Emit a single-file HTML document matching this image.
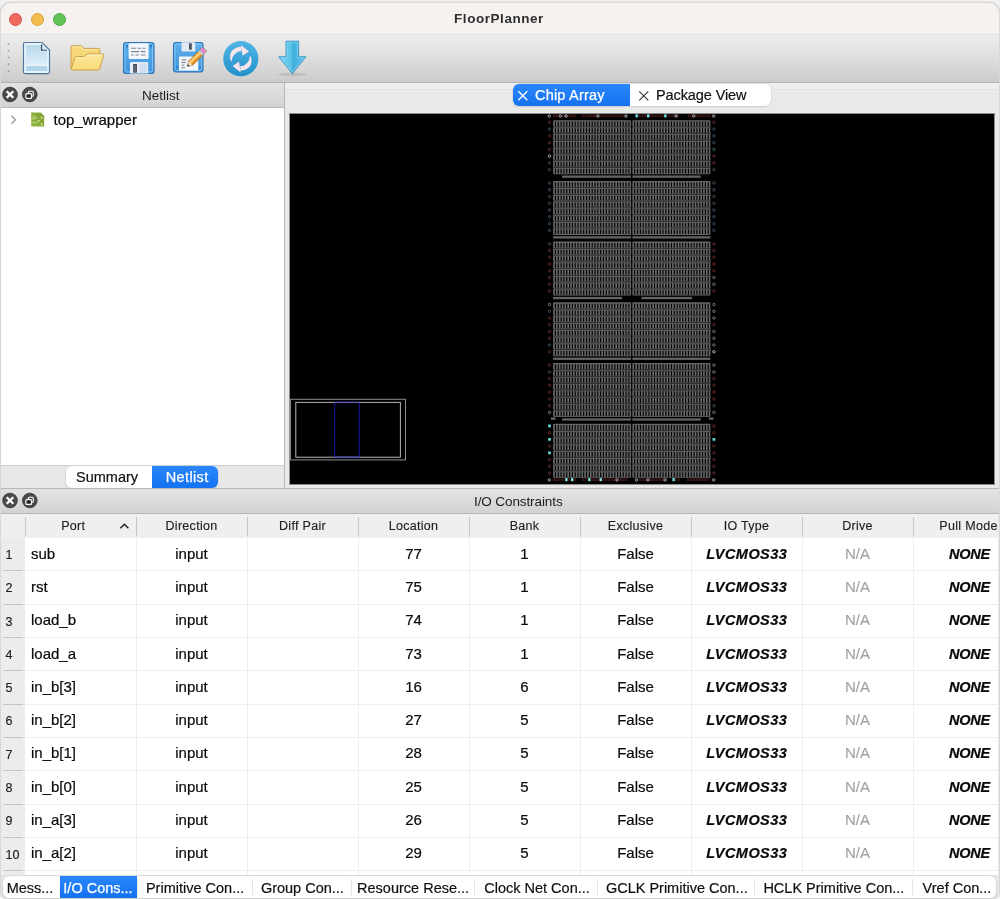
<!DOCTYPE html>
<html><head><meta charset="utf-8"><title>FloorPlanner</title>
<style>
html,body{margin:0;padding:0;}
body{width:1000px;height:899px;overflow:hidden;background:#f3f3f3;font-family:"Liberation Sans",sans-serif;position:relative;color:#1a1a1a;}
.abs{position:absolute;}
.win{position:absolute;left:0;top:2px;width:998px;height:895.5px;border:1px solid #d8d8d8;border-radius:11px 11px 10px 10px;box-shadow:0 0 2px rgba(0,0,0,0.2);overflow:hidden;background:#e9e9e9;box-sizing:content-box;}
.inner{position:absolute;left:-1px;top:-3px;width:1000px;height:899px;will-change:transform;}
.title{left:0;top:3px;width:1000px;height:31px;background:#f6f2f0;}
.title span{position:absolute;left:0;width:998px;text-align:center;top:8.2px;font-weight:bold;font-size:13.5px;letter-spacing:0.55px;color:#2e2e2e;line-height:16px;}
.tl{position:absolute;width:13px;height:13px;border-radius:50%;top:9.7px;box-sizing:border-box;}
.toolbar{left:0;top:34px;width:1000px;height:48px;background:linear-gradient(#ececec,#e4e4e4 30%,#cfcfcf 92%,#cacaca);border-top:1px solid #e2dfdd;box-sizing:border-box;}
.tbline{left:0;top:82px;width:1000px;height:1px;background:#b4b4b4;}
.dockhead{background:linear-gradient(#e3e3e3,#d3d3d3);font-size:13px;color:#222;text-align:center;}
.t{position:absolute;white-space:nowrap;line-height:1;}
</style></head><body>
<div class="win"><div class="inner">
<div class="abs title"><span>FloorPlanner</span>
<div class="tl" style="left:9px;background:#ee6a5f;border:0.5px solid #d5544a;"></div>
<div class="tl" style="left:31px;background:#f5bd4f;border:0.5px solid #d9a03c;"></div>
<div class="tl" style="left:53px;background:#61c454;border:0.5px solid #4ca73f;"></div>
</div>
<div class="abs toolbar"></div><div class="abs tbline"></div>
<svg class="abs" style="left:0;top:34px" width="1000" height="48" viewBox="0 34 1000 48">
<defs>
<linearGradient id="gdoc" x1="0" y1="0" x2="0" y2="1"><stop offset="0" stop-color="#b7d9eb"/><stop offset="1" stop-color="#eaf5fb"/></linearGradient>
<linearGradient id="gfold" x1="0" y1="0" x2="0" y2="1"><stop offset="0" stop-color="#fce79b"/><stop offset="1" stop-color="#f8da7a"/></linearGradient>
<linearGradient id="gflop" x1="0" y1="0" x2="0" y2="1"><stop offset="0" stop-color="#5eb0ee"/><stop offset="1" stop-color="#3f93da"/></linearGradient>
<linearGradient id="gref" x1="0" y1="0" x2="0" y2="1"><stop offset="0" stop-color="#52b5e5"/><stop offset="1" stop-color="#2291cb"/></linearGradient>
<linearGradient id="garr" x1="0" y1="0" x2="1" y2="0"><stop offset="0" stop-color="#7ed3f1"/><stop offset="0.5" stop-color="#58c0e7"/><stop offset="0.5" stop-color="#41afdc"/><stop offset="1" stop-color="#5ec3e9"/></linearGradient>
<linearGradient id="gnotch" x1="0" y1="0" x2="0" y2="1"><stop offset="0" stop-color="#1d5a9c"/><stop offset="1" stop-color="#3f93da" stop-opacity="0"/></linearGradient>
</defs>
<g fill="#9b9b9b"><rect x="7.7" y="43.2" width="1.6" height="1.6"/><rect x="7.7" y="50" width="1.6" height="1.6"/><rect x="7.7" y="56.7" width="1.6" height="1.6"/><rect x="7.7" y="63.4" width="1.6" height="1.6"/><rect x="7.7" y="70.2" width="1.6" height="1.6"/></g>
<!-- new doc -->
<path d="M25 42.5 H42 L49.5 50 V72 Q49.5 73.5 48 73.5 H25 Q23.5 73.5 23.5 72 V44 Q23.5 42.5 25 42.5 Z" fill="#e8f5fd" stroke="#54779c" stroke-width="1.2"/>
<path d="M24.6 73.9 H48.4" stroke="#4a6a8c" stroke-width="0.9" opacity="0.7"/>
<path d="M26 45 H41.3 V51.2 H47.3 V71 H26 Z" fill="url(#gdoc)"/>
<rect x="26" y="64.8" width="21.3" height="1.1" fill="#f4fafd"/><rect x="26" y="65.9" width="21.3" height="5.1" fill="#b0d4e9"/>
<path d="M41.6 44.6 V50.2 H47" fill="none" stroke="#34506c" stroke-width="1.3"/>
<path d="M42.6 44.8 L47.6 49.5 H42.6 Z" fill="#dcebf6"/>
<!-- folder -->
<path d="M71 47.2 Q71 45.7 72.5 45.7 H81.2 Q82 45.7 82.5 46.5 L83.6 48.4 H98.3 Q99.7 48.4 99.7 49.8 V69 H71 Z" fill="#f6d777" stroke="#cf9f45" stroke-width="1"/>
<path d="M72.2 47 H81.4 L82.9 49.6 H98.5" fill="none" stroke="#fdeeb4" stroke-width="0.9"/>
<path d="M75.6 56.6 H84 L87.2 53.9 H102.6 Q104 53.9 103.6 55.3 L99.6 68.8 Q99.2 70 98 70 H72.4 Q71 70 71.4 68.6 L74.6 57.6 Q74.9 56.6 75.6 56.6Z" fill="url(#gfold)" stroke="#cf9f45" stroke-width="1"/>
<path d="M76.2 57.8 H84.5 L87.7 55.1 H102.3" stroke="#fff4c8" stroke-width="0.9" fill="none"/>
<!-- save -->
<rect x="123.5" y="42.5" width="30.5" height="31" rx="2.6" fill="url(#gflop)" stroke="#2f74b8" stroke-width="1.1"/>
<rect x="125" y="44" width="27.5" height="28" rx="1.6" fill="none" stroke="#86c8f6" stroke-width="0.9"/>
<rect x="126" y="44.8" width="1.7" height="6" fill="url(#gnotch)"/><rect x="149.8" y="44.8" width="1.9" height="6" fill="url(#gnotch)"/>
<rect x="128.6" y="43.3" width="20" height="15.6" rx="1.2" fill="#f3f7fc"/>
<g stroke="#7c8690" stroke-width="1.1"><path d="M131 48.2h5M137.5 48.2h3.6M142.5 48.2h3M131 51.6h8.2M140.8 51.6h4.8M131 55h2.8M135.4 55h3.6M140.8 55h4.6"/></g>
<rect x="130" y="62" width="18.2" height="11.6" rx="1.2" fill="#e6edf8"/>
<rect x="139.5" y="63.2" width="7.6" height="9.6" fill="#d2ddef"/>
<rect x="133.2" y="64" width="3.7" height="8.6" fill="#3f454f"/>
<rect x="134.5" y="65" width="1.1" height="7.6" fill="#79818e"/>
<!-- save as -->
<rect x="173.5" y="42.5" width="29.5" height="29.5" rx="2.4" fill="url(#gflop)" stroke="#2f74b8" stroke-width="1.1"/>
<rect x="175" y="44" width="26.5" height="26.5" rx="1.5" fill="none" stroke="#86c8f6" stroke-width="0.9"/>
<rect x="181.5" y="42.3" width="13.8" height="9.2" rx="1" fill="#e3eaf6"/>
<rect x="189" y="43.3" width="2.8" height="6.4" fill="#4d545e"/>
<rect x="179" y="56.5" width="19.3" height="14" rx="1" fill="#f4f7fb"/>
<g stroke="#6d7680" stroke-width="1"><path d="M181.5 60h5M181.5 62.6h4.2M181.5 65.2h3M181.5 67.8h3.4"/></g>
<rect x="176" y="66.6" width="1.3" height="1.3" fill="#2a68a8"/><rect x="199.4" y="66.6" width="1.3" height="1.3" fill="#2a68a8"/>
<g transform="translate(187.4,66.4) rotate(-45)">
<path d="M0 0 L4.6 -2.9 H23.2 Q24.4 -2.9 24.4 -1.7 V1.7 Q24.4 2.9 23.2 2.9 H4.6 Z" fill="none" stroke="#6e4c1c" stroke-width="0.9" opacity="0.75"/>
<path d="M0 0 L4.6 -2.8 V2.8 Z" fill="#efd6b0"/>
<path d="M0 0 L1.9 -1.15 V1.15 Z" fill="#222"/>
<rect x="4.6" y="-2.8" width="13.6" height="5.6" fill="#f2a130"/>
<rect x="4.6" y="-1.5" width="13.6" height="1.7" fill="#fcd88f"/>
<rect x="4.6" y="1.5" width="13.6" height="1.3" fill="#d6871e"/>
<rect x="18.2" y="-2.9" width="1.8" height="5.8" fill="#d4d4d4"/>
<rect x="20" y="-2.9" width="4.3" height="5.8" rx="1.2" fill="#e08cc8"/>
</g>
<!-- refresh -->
<circle cx="240.8" cy="58.7" r="17.6" fill="url(#gref)"/>
<g id="rarr" fill="#f9e4eb"><path d="M231.57 61.52 L231.01 60.86 L230.63 60.10 L230.35 59.29 L230.16 58.45 L230.04 57.59 L230.01 56.70 L230.06 55.81 L230.19 54.91 L230.40 54.01 L230.69 53.13 L231.06 52.27 L231.50 51.44 L232.11 50.72 L232.78 50.05 L233.49 49.43 L234.26 48.88 L235.06 48.39 L235.91 47.96 L236.78 47.61 L237.68 47.32 L238.60 47.11 L239.53 46.97 L240.47 46.90 L241.42 46.92 L241.19 51.31 L240.60 51.30 L240.01 51.34 L239.42 51.43 L238.84 51.56 L238.28 51.74 L237.73 51.97 L237.20 52.23 L236.70 52.54 L236.22 52.89 L235.77 53.27 L235.35 53.69 L234.97 54.14 L234.52 54.55 L234.09 55.01 L233.70 55.50 L233.33 56.03 L233.00 56.60 L232.71 57.20 L232.46 57.84 L232.25 58.50 L232.08 59.20 L231.95 59.92 L231.84 60.67 L231.67 61.49Z"/><path d="M240.9 44.9 L248.9 51.5 L242.6 55.8 Z"/></g>
<use href="#rarr" transform="rotate(180 240.8 58.7)"/>
<!-- download arrow -->
<ellipse cx="292.3" cy="74.6" rx="14" ry="1.8" fill="#000" opacity="0.09"/>
<path d="M286 41.2 H298.6 V56.8 H305.8 L292.3 73.6 L278.8 56.8 H286 Z" fill="url(#garr)" stroke="#3798c8" stroke-width="1" stroke-linejoin="round"/>
<path d="M287.1 42.3 H297.5 V57.9 H303.4 L292.3 71.8 L281.2 57.9 H287.1 Z" fill="none" stroke="#8fd8f4" stroke-width="0.8" opacity="0.8"/>
</svg>

<!-- left dock -->
<div class="abs dockhead" style="left:0;top:83px;width:284px;height:24px;"></div>
<div class="abs" style="left:0;top:107px;width:284px;height:1px;background:#b9b9b9;"></div>
<span class="t" style="left:142px;top:88.5px;font-size:13.5px;color:#1c1c1c;">Netlist</span>
<svg class="abs" style="left:0px;top:86px" width="40" height="17" viewBox="0 0 40 17">
<circle cx="10" cy="8.5" r="7.3" fill="#4b4b4b" stroke="#2f2f2f" stroke-width="0.8"/>
<path d="M6.7 5.2 L13.3 11.8 M13.3 5.2 L6.7 11.8" stroke="#fff" stroke-width="2.3" stroke-linecap="butt"/>
<circle cx="29.8" cy="8.5" r="7.3" fill="#4b4b4b" stroke="#2f2f2f" stroke-width="0.8"/>
<rect x="28.3" y="5.2" width="5" height="5" rx="1" fill="none" stroke="#fff" stroke-width="1.1"/>
<rect x="25.9" y="7.6" width="5.6" height="4.8" rx="1" fill="#222" stroke="#fff" stroke-width="1.2"/>
</svg>
<div class="abs" style="left:0;top:108px;width:284px;height:357px;background:#fff;"></div>
<div class="abs" style="left:284px;top:83px;width:1px;height:405px;background:#b9b9b9;"></div>
<div class="abs" style="left:285px;top:83px;width:715px;height:6px;background:#eeeeee;"></div><div class="abs" style="left:285px;top:88.5px;width:715px;height:1px;background:#e2e2e2;"></div>
<div class="abs" style="left:0;top:464.5px;width:284px;height:1px;background:#cfcfcf;"></div>
<div class="abs" style="left:0;top:465.5px;width:284px;height:23px;background:#e7e7e7;"></div>
<svg class="abs" style="left:10px;top:114px" width="8" height="12" viewBox="0 0 8 12"><path d="M1.4 1.8 L5.6 5.8 L1.4 9.8" fill="none" stroke="#9c9c9c" stroke-width="1.3"/></svg>
<svg class="abs" style="left:31px;top:112px" width="14" height="15" viewBox="0 0 14 15">
<defs><linearGradient id="gchip" x1="0" y1="1" x2="1" y2="0"><stop offset="0" stop-color="#93b83c"/><stop offset="1" stop-color="#7f9f37"/></linearGradient></defs>
<path d="M0.2 0.6 H9.6 L13.2 3.8 V14.6 H0.2 Z" fill="url(#gchip)"/>
<g fill="#d4ea9c"><circle cx="10.7" cy="5.7" r="0.95"/><circle cx="7.6" cy="8.9" r="0.95"/><circle cx="10.7" cy="12.2" r="0.95"/><rect x="1.6" y="3.6" width="1.6" height="1.5" opacity="0.8"/><rect x="3.8" y="4.6" width="1.6" height="2" opacity="0.8"/><rect x="1.4" y="6" width="2" height="1.4" opacity="0.8"/></g>
<path d="M1 10.6 H5.6 Q6.6 10.6 7.2 9.6" fill="none" stroke="#c3dd8c" stroke-width="0.9"/>
</svg>
<span class="t" style="left:53.5px;top:112px;font-size:15px;color:#0a0a0a;-webkit-text-stroke:0.2px #0a0a0a;">top_wrapper</span>
<!-- left tabs -->
<div class="abs" style="left:66px;top:466px;width:152px;height:22px;border-radius:6px;background:#fff;box-shadow:0 0 0 0.5px #cfcfcf, 0 1px 1.5px rgba(0,0,0,0.12);"></div>
<div class="abs" style="left:152px;top:466px;width:66px;height:22px;border-radius:0 6px 6px 0;background:linear-gradient(#2a86fb,#1572f0);"></div>
<span class="t" style="left:76px;top:470px;font-size:14.5px;color:#111;-webkit-text-stroke:0.2px #111;">Summary</span>
<span class="t" style="left:165.8px;top:470px;font-size:14.5px;color:#fff;letter-spacing:0.35px;-webkit-text-stroke:0.25px #fff;">Netlist</span>
<!-- center tabs -->
<div class="abs" style="left:513px;top:84px;width:258px;height:22px;border-radius:6px;background:#fff;box-shadow:0 0 0 0.5px #d2d2d2, 0 1px 1.5px rgba(0,0,0,0.12);"></div>
<div class="abs" style="left:513px;top:84px;width:117px;height:22px;border-radius:6px 0 0 6px;background:linear-gradient(#2a86fb,#1572f0);"></div>
<svg class="abs" style="left:517px;top:90px" width="12" height="12" viewBox="0 0 12 12"><path d="M1.3 1.3 L10.3 10.3 M10.3 1.3 L1.3 10.3" stroke="#fff" stroke-width="1.3"/></svg>
<span class="t" style="left:535px;top:88px;font-size:14.5px;color:#fff;letter-spacing:0.2px;-webkit-text-stroke:0.25px #fff;">Chip Array</span>
<svg class="abs" style="left:638px;top:90px" width="12" height="12" viewBox="0 0 12 12"><path d="M1.3 1.3 L10.3 10.3 M10.3 1.3 L1.3 10.3" stroke="#3a3a3a" stroke-width="1.2"/></svg>
<span class="t" style="left:656px;top:88px;font-size:14.5px;color:#111;letter-spacing:-0.1px;-webkit-text-stroke:0.2px #111;">Package View</span>
<div class="abs" style="left:289px;top:113px;width:706px;height:371.5px;background:#8c8c8c;"></div>
<div class="abs" style="left:290px;top:114px;width:704px;height:369.6px;background:#000;"></div>
<svg class="abs" style="left:290px;top:114px" width="704" height="370" viewBox="290 114 704 370">
<defs><g id="hb"><rect x="0" y="0" width="78.0" height="54.0" rx="1" fill="#666666"/><path d="M0 6.75h78.0M0 13.50h78.0M0 20.25h78.0M0 27.00h78.0M0 33.75h78.0M0 40.50h78.0M0 47.25h78.0" stroke="#343434" stroke-width="1.3" fill="none"/><path d="M2.35 1.35v4.6M5.18 1.35v4.6M8.00 1.35v4.6M10.83 1.35v4.6M13.65 1.35v4.6M16.48 1.35v4.6M19.30 1.35v4.6M22.13 1.35v4.6M24.95 1.35v4.6M27.78 1.35v4.6M30.60 1.35v4.6M33.43 1.35v4.6M36.25 1.35v4.6M39.08 1.35v4.6M41.90 1.35v4.6M44.73 1.35v4.6M47.55 1.35v4.6M50.38 1.35v4.6M53.20 1.35v4.6M56.03 1.35v4.6M58.85 1.35v4.6M61.68 1.35v4.6M64.50 1.35v4.6M67.33 1.35v4.6M70.15 1.35v4.6M72.97 1.35v4.6M75.80 1.35v4.6M2.35 8.10v4.6M5.18 8.10v4.6M8.00 8.10v4.6M10.83 8.10v4.6M13.65 8.10v4.6M16.48 8.10v4.6M19.30 8.10v4.6M22.13 8.10v4.6M24.95 8.10v4.6M27.78 8.10v4.6M30.60 8.10v4.6M33.43 8.10v4.6M36.25 8.10v4.6M39.08 8.10v4.6M41.90 8.10v4.6M44.73 8.10v4.6M47.55 8.10v4.6M50.38 8.10v4.6M53.20 8.10v4.6M56.03 8.10v4.6M58.85 8.10v4.6M61.68 8.10v4.6M64.50 8.10v4.6M67.33 8.10v4.6M70.15 8.10v4.6M72.97 8.10v4.6M75.80 8.10v4.6M2.35 14.85v4.6M5.18 14.85v4.6M8.00 14.85v4.6M10.83 14.85v4.6M13.65 14.85v4.6M16.48 14.85v4.6M19.30 14.85v4.6M22.13 14.85v4.6M24.95 14.85v4.6M27.78 14.85v4.6M30.60 14.85v4.6M33.43 14.85v4.6M36.25 14.85v4.6M39.08 14.85v4.6M41.90 14.85v4.6M44.73 14.85v4.6M47.55 14.85v4.6M50.38 14.85v4.6M53.20 14.85v4.6M56.03 14.85v4.6M58.85 14.85v4.6M61.68 14.85v4.6M64.50 14.85v4.6M67.33 14.85v4.6M70.15 14.85v4.6M72.97 14.85v4.6M75.80 14.85v4.6M2.35 21.60v4.6M5.18 21.60v4.6M8.00 21.60v4.6M10.83 21.60v4.6M13.65 21.60v4.6M16.48 21.60v4.6M19.30 21.60v4.6M22.13 21.60v4.6M24.95 21.60v4.6M27.78 21.60v4.6M30.60 21.60v4.6M33.43 21.60v4.6M36.25 21.60v4.6M39.08 21.60v4.6M41.90 21.60v4.6M44.73 21.60v4.6M47.55 21.60v4.6M50.38 21.60v4.6M53.20 21.60v4.6M56.03 21.60v4.6M58.85 21.60v4.6M61.68 21.60v4.6M64.50 21.60v4.6M67.33 21.60v4.6M70.15 21.60v4.6M72.97 21.60v4.6M75.80 21.60v4.6M2.35 28.35v4.6M5.18 28.35v4.6M8.00 28.35v4.6M10.83 28.35v4.6M13.65 28.35v4.6M16.48 28.35v4.6M19.30 28.35v4.6M22.13 28.35v4.6M24.95 28.35v4.6M27.78 28.35v4.6M30.60 28.35v4.6M33.43 28.35v4.6M36.25 28.35v4.6M39.08 28.35v4.6M41.90 28.35v4.6M44.73 28.35v4.6M47.55 28.35v4.6M50.38 28.35v4.6M53.20 28.35v4.6M56.03 28.35v4.6M58.85 28.35v4.6M61.68 28.35v4.6M64.50 28.35v4.6M67.33 28.35v4.6M70.15 28.35v4.6M72.97 28.35v4.6M75.80 28.35v4.6M2.35 35.10v4.6M5.18 35.10v4.6M8.00 35.10v4.6M10.83 35.10v4.6M13.65 35.10v4.6M16.48 35.10v4.6M19.30 35.10v4.6M22.13 35.10v4.6M24.95 35.10v4.6M27.78 35.10v4.6M30.60 35.10v4.6M33.43 35.10v4.6M36.25 35.10v4.6M39.08 35.10v4.6M41.90 35.10v4.6M44.73 35.10v4.6M47.55 35.10v4.6M50.38 35.10v4.6M53.20 35.10v4.6M56.03 35.10v4.6M58.85 35.10v4.6M61.68 35.10v4.6M64.50 35.10v4.6M67.33 35.10v4.6M70.15 35.10v4.6M72.97 35.10v4.6M75.80 35.10v4.6M2.35 41.85v4.6M5.18 41.85v4.6M8.00 41.85v4.6M10.83 41.85v4.6M13.65 41.85v4.6M16.48 41.85v4.6M19.30 41.85v4.6M22.13 41.85v4.6M24.95 41.85v4.6M27.78 41.85v4.6M30.60 41.85v4.6M33.43 41.85v4.6M36.25 41.85v4.6M39.08 41.85v4.6M41.90 41.85v4.6M44.73 41.85v4.6M47.55 41.85v4.6M50.38 41.85v4.6M53.20 41.85v4.6M56.03 41.85v4.6M58.85 41.85v4.6M61.68 41.85v4.6M64.50 41.85v4.6M67.33 41.85v4.6M70.15 41.85v4.6M72.97 41.85v4.6M75.80 41.85v4.6M2.35 48.60v4.6M5.18 48.60v4.6M8.00 48.60v4.6M10.83 48.60v4.6M13.65 48.60v4.6M16.48 48.60v4.6M19.30 48.60v4.6M22.13 48.60v4.6M24.95 48.60v4.6M27.78 48.60v4.6M30.60 48.60v4.6M33.43 48.60v4.6M36.25 48.60v4.6M39.08 48.60v4.6M41.90 48.60v4.6M44.73 48.60v4.6M47.55 48.60v4.6M50.38 48.60v4.6M53.20 48.60v4.6M56.03 48.60v4.6M58.85 48.60v4.6M61.68 48.60v4.6M64.50 48.60v4.6M67.33 48.60v4.6M70.15 48.60v4.6M72.97 48.60v4.6M75.80 48.60v4.6" stroke="#000" stroke-width="1.15" fill="none"/></g></defs>
<use href="#hb" x="553.1" y="120.2"/><use href="#hb" x="632.4" y="120.2"/>
<use href="#hb" x="553.1" y="180.9"/><use href="#hb" x="632.4" y="180.9"/>
<use href="#hb" x="553.1" y="241.6"/><use href="#hb" x="632.4" y="241.6"/>
<use href="#hb" x="553.1" y="302.3"/><use href="#hb" x="632.4" y="302.3"/>
<use href="#hb" x="553.1" y="363.0"/><use href="#hb" x="632.4" y="363.0"/>
<use href="#hb" x="553.1" y="423.7"/><use href="#hb" x="632.4" y="423.7"/>
<rect x="562.0" y="175.5" width="69.0" height="2.3" fill="#646464"/>
<rect x="632.4" y="175.5" width="68.3" height="2.3" fill="#646464"/>
<rect x="553.1" y="236.2" width="77.9" height="2.3" fill="#646464"/>
<rect x="632.4" y="236.2" width="78.0" height="2.3" fill="#646464"/>
<rect x="553.1" y="296.9" width="68.9" height="2.3" fill="#646464"/>
<rect x="641.4" y="296.9" width="50.6" height="2.3" fill="#646464"/>
<rect x="553.1" y="357.6" width="77.9" height="2.3" fill="#646464"/>
<rect x="632.4" y="357.6" width="78.0" height="2.3" fill="#646464"/>
<rect x="562.0" y="418.3" width="69.0" height="2.3" fill="#646464"/>
<rect x="632.4" y="418.3" width="68.3" height="2.3" fill="#646464"/>
<rect x="551" y="417.6" width="4.5" height="2" fill="#777"/><rect x="709" y="417.6" width="4.5" height="2" fill="#777"/>
<rect x="548.35" y="121.22" width="2.3" height="2.3" rx="0.8" fill="#0a0a0a" stroke="#6a2a2a" stroke-width="0.9"/>
<rect x="712.75" y="121.22" width="2.3" height="2.3" rx="0.8" fill="#0a0a0a" stroke="#6a2a2a" stroke-width="0.9"/>
<rect x="548.35" y="127.97" width="2.3" height="2.3" rx="0.8" fill="#0a0a0a" stroke="#3e5163" stroke-width="0.9"/>
<rect x="712.75" y="127.97" width="2.3" height="2.3" rx="0.8" fill="#0a0a0a" stroke="#3e5163" stroke-width="0.9"/>
<rect x="548.35" y="134.72" width="2.3" height="2.3" rx="0.8" fill="#0a0a0a" stroke="#6a2a2a" stroke-width="0.9"/>
<rect x="712.75" y="134.72" width="2.3" height="2.3" rx="0.8" fill="#0a0a0a" stroke="#3e5163" stroke-width="0.9"/>
<rect x="548.35" y="141.47" width="2.3" height="2.3" rx="0.8" fill="#0a0a0a" stroke="#6a2a2a" stroke-width="0.9"/>
<rect x="712.75" y="141.47" width="2.3" height="2.3" rx="0.8" fill="#0a0a0a" stroke="#3e5163" stroke-width="0.9"/>
<rect x="548.35" y="148.22" width="2.3" height="2.3" rx="0.8" fill="#0a0a0a" stroke="#6a2a2a" stroke-width="0.9"/>
<rect x="712.75" y="148.22" width="2.3" height="2.3" rx="0.8" fill="#0a0a0a" stroke="#2f6a6a" stroke-width="0.9"/>
<rect x="548.35" y="154.97" width="2.3" height="2.3" rx="0.8" fill="#0a0a0a" stroke="#c4c4c4" stroke-width="0.9"/>
<rect x="712.75" y="154.97" width="2.3" height="2.3" rx="0.8" fill="#0a0a0a" stroke="#6a2a2a" stroke-width="0.9"/>
<rect x="548.35" y="161.72" width="2.3" height="2.3" rx="0.8" fill="#0a0a0a" stroke="#3e5163" stroke-width="0.9"/>
<rect x="712.75" y="161.72" width="2.3" height="2.3" rx="0.8" fill="#0a0a0a" stroke="#6a2a2a" stroke-width="0.9"/>
<rect x="548.35" y="168.47" width="2.3" height="2.3" rx="0.8" fill="#0a0a0a" stroke="#3e5163" stroke-width="0.9"/>
<rect x="712.75" y="168.47" width="2.3" height="2.3" rx="0.8" fill="#0a0a0a" stroke="#3e5163" stroke-width="0.9"/>
<rect x="548.35" y="181.93" width="2.3" height="2.3" rx="0.8" fill="#0a0a0a" stroke="#3e5163" stroke-width="0.9"/>
<rect x="712.75" y="181.93" width="2.3" height="2.3" rx="0.8" fill="#0a0a0a" stroke="#3e5163" stroke-width="0.9"/>
<rect x="548.35" y="188.68" width="2.3" height="2.3" rx="0.8" fill="#0a0a0a" stroke="#3e5163" stroke-width="0.9"/>
<rect x="712.75" y="188.68" width="2.3" height="2.3" rx="0.8" fill="#0a0a0a" stroke="#3e5163" stroke-width="0.9"/>
<rect x="548.35" y="195.43" width="2.3" height="2.3" rx="0.8" fill="#0a0a0a" stroke="#3e5163" stroke-width="0.9"/>
<rect x="712.75" y="195.43" width="2.3" height="2.3" rx="0.8" fill="#0a0a0a" stroke="#3e5163" stroke-width="0.9"/>
<rect x="548.35" y="202.18" width="2.3" height="2.3" rx="0.8" fill="#0a0a0a" stroke="#3e5163" stroke-width="0.9"/>
<rect x="712.75" y="202.18" width="2.3" height="2.3" rx="0.8" fill="#0a0a0a" stroke="#3e5163" stroke-width="0.9"/>
<rect x="548.35" y="208.93" width="2.3" height="2.3" rx="0.8" fill="#0a0a0a" stroke="#3e5163" stroke-width="0.9"/>
<rect x="712.75" y="208.93" width="2.3" height="2.3" rx="0.8" fill="#0a0a0a" stroke="#3e5163" stroke-width="0.9"/>
<rect x="548.35" y="215.68" width="2.3" height="2.3" rx="0.8" fill="#0a0a0a" stroke="#3e5163" stroke-width="0.9"/>
<rect x="712.75" y="215.68" width="2.3" height="2.3" rx="0.8" fill="#0a0a0a" stroke="#3e5163" stroke-width="0.9"/>
<rect x="548.35" y="222.43" width="2.3" height="2.3" rx="0.8" fill="#0a0a0a" stroke="#3e5163" stroke-width="0.9"/>
<rect x="712.75" y="222.43" width="2.3" height="2.3" rx="0.8" fill="#0a0a0a" stroke="#3e5163" stroke-width="0.9"/>
<rect x="548.35" y="229.18" width="2.3" height="2.3" rx="0.8" fill="#0a0a0a" stroke="#3e5163" stroke-width="0.9"/>
<rect x="712.75" y="229.18" width="2.3" height="2.3" rx="0.8" fill="#0a0a0a" stroke="#3e5163" stroke-width="0.9"/>
<rect x="548.35" y="242.63" width="2.3" height="2.3" rx="0.8" fill="#0a0a0a" stroke="#3e5163" stroke-width="0.9"/>
<rect x="712.75" y="242.63" width="2.3" height="2.3" rx="0.8" fill="#0a0a0a" stroke="#6a2a2a" stroke-width="0.9"/>
<rect x="548.35" y="249.38" width="2.3" height="2.3" rx="0.8" fill="#0a0a0a" stroke="#6a2a2a" stroke-width="0.9"/>
<rect x="712.75" y="249.38" width="2.3" height="2.3" rx="0.8" fill="#0a0a0a" stroke="#6a2a2a" stroke-width="0.9"/>
<rect x="548.35" y="256.13" width="2.3" height="2.3" rx="0.8" fill="#0a0a0a" stroke="#6a2a2a" stroke-width="0.9"/>
<rect x="712.75" y="256.13" width="2.3" height="2.3" rx="0.8" fill="#0a0a0a" stroke="#6a2a2a" stroke-width="0.9"/>
<rect x="548.35" y="262.88" width="2.3" height="2.3" rx="0.8" fill="#0a0a0a" stroke="#6a2a2a" stroke-width="0.9"/>
<rect x="712.75" y="262.88" width="2.3" height="2.3" rx="0.8" fill="#0a0a0a" stroke="#6a2a2a" stroke-width="0.9"/>
<rect x="548.35" y="269.63" width="2.3" height="2.3" rx="0.8" fill="#0a0a0a" stroke="#6a2a2a" stroke-width="0.9"/>
<rect x="712.75" y="269.63" width="2.3" height="2.3" rx="0.8" fill="#0a0a0a" stroke="#6a2a2a" stroke-width="0.9"/>
<rect x="548.35" y="276.38" width="2.3" height="2.3" rx="0.8" fill="#0a0a0a" stroke="#6a2a2a" stroke-width="0.9"/>
<rect x="712.75" y="276.38" width="2.3" height="2.3" rx="0.8" fill="#0a0a0a" stroke="#7e7e7e" stroke-width="0.9"/>
<rect x="548.35" y="283.13" width="2.3" height="2.3" rx="0.8" fill="#0a0a0a" stroke="#6a2a2a" stroke-width="0.9"/>
<rect x="712.75" y="283.13" width="2.3" height="2.3" rx="0.8" fill="#0a0a0a" stroke="#7e7e7e" stroke-width="0.9"/>
<rect x="548.35" y="289.88" width="2.3" height="2.3" rx="0.8" fill="#0a0a0a" stroke="#6a2a2a" stroke-width="0.9"/>
<rect x="712.75" y="289.88" width="2.3" height="2.3" rx="0.8" fill="#0a0a0a" stroke="#6a2a2a" stroke-width="0.9"/>
<rect x="548.35" y="303.33" width="2.3" height="2.3" rx="0.8" fill="#0a0a0a" stroke="#7e7e7e" stroke-width="0.9"/>
<rect x="712.75" y="303.33" width="2.3" height="2.3" rx="0.8" fill="#0a0a0a" stroke="#7e7e7e" stroke-width="0.9"/>
<rect x="548.35" y="310.08" width="2.3" height="2.3" rx="0.8" fill="#0a0a0a" stroke="#3e5163" stroke-width="0.9"/>
<rect x="712.75" y="310.08" width="2.3" height="2.3" rx="0.8" fill="#0a0a0a" stroke="#7e7e7e" stroke-width="0.9"/>
<rect x="548.35" y="316.83" width="2.3" height="2.3" rx="0.8" fill="#0a0a0a" stroke="#6a2a2a" stroke-width="0.9"/>
<rect x="712.75" y="316.83" width="2.3" height="2.3" rx="0.8" fill="#0a0a0a" stroke="#7e7e7e" stroke-width="0.9"/>
<rect x="548.35" y="323.58" width="2.3" height="2.3" rx="0.8" fill="#0a0a0a" stroke="#6a2a2a" stroke-width="0.9"/>
<rect x="712.75" y="323.58" width="2.3" height="2.3" rx="0.8" fill="#0a0a0a" stroke="#6a2a2a" stroke-width="0.9"/>
<rect x="548.35" y="330.33" width="2.3" height="2.3" rx="0.8" fill="#0a0a0a" stroke="#6a2a2a" stroke-width="0.9"/>
<rect x="712.75" y="330.33" width="2.3" height="2.3" rx="0.8" fill="#0a0a0a" stroke="#7e7e7e" stroke-width="0.9"/>
<rect x="548.35" y="337.08" width="2.3" height="2.3" rx="0.8" fill="#0a0a0a" stroke="#6a2a2a" stroke-width="0.9"/>
<rect x="712.75" y="337.08" width="2.3" height="2.3" rx="0.8" fill="#0a0a0a" stroke="#7e7e7e" stroke-width="0.9"/>
<rect x="548.35" y="343.83" width="2.3" height="2.3" rx="0.8" fill="#0a0a0a" stroke="#3e5163" stroke-width="0.9"/>
<rect x="712.75" y="343.83" width="2.3" height="2.3" rx="0.8" fill="#0a0a0a" stroke="#7e7e7e" stroke-width="0.9"/>
<rect x="548.35" y="350.58" width="2.3" height="2.3" rx="0.8" fill="#0a0a0a" stroke="#6a2a2a" stroke-width="0.9"/>
<rect x="712.75" y="350.58" width="2.3" height="2.3" rx="0.8" fill="#0a0a0a" stroke="#c4c4c4" stroke-width="0.9"/>
<rect x="548.35" y="364.03" width="2.3" height="2.3" rx="0.8" fill="#0a0a0a" stroke="#6a2a2a" stroke-width="0.9"/>
<rect x="712.75" y="364.03" width="2.3" height="2.3" rx="0.8" fill="#0a0a0a" stroke="#7e7e7e" stroke-width="0.9"/>
<rect x="548.35" y="370.78" width="2.3" height="2.3" rx="0.8" fill="#0a0a0a" stroke="#3e5163" stroke-width="0.9"/>
<rect x="712.75" y="370.78" width="2.3" height="2.3" rx="0.8" fill="#0a0a0a" stroke="#7e7e7e" stroke-width="0.9"/>
<rect x="548.35" y="377.53" width="2.3" height="2.3" rx="0.8" fill="#0a0a0a" stroke="#6a2a2a" stroke-width="0.9"/>
<rect x="712.75" y="377.53" width="2.3" height="2.3" rx="0.8" fill="#0a0a0a" stroke="#6a2a2a" stroke-width="0.9"/>
<rect x="548.35" y="384.28" width="2.3" height="2.3" rx="0.8" fill="#0a0a0a" stroke="#6a2a2a" stroke-width="0.9"/>
<rect x="712.75" y="384.28" width="2.3" height="2.3" rx="0.8" fill="#0a0a0a" stroke="#6a2a2a" stroke-width="0.9"/>
<rect x="548.35" y="391.03" width="2.3" height="2.3" rx="0.8" fill="#0a0a0a" stroke="#6a2a2a" stroke-width="0.9"/>
<rect x="712.75" y="391.03" width="2.3" height="2.3" rx="0.8" fill="#0a0a0a" stroke="#6a2a2a" stroke-width="0.9"/>
<rect x="548.35" y="397.78" width="2.3" height="2.3" rx="0.8" fill="#0a0a0a" stroke="#6a2a2a" stroke-width="0.9"/>
<rect x="712.75" y="397.78" width="2.3" height="2.3" rx="0.8" fill="#0a0a0a" stroke="#6a2a2a" stroke-width="0.9"/>
<rect x="548.35" y="404.53" width="2.3" height="2.3" rx="0.8" fill="#0a0a0a" stroke="#6a2a2a" stroke-width="0.9"/>
<rect x="712.75" y="404.53" width="2.3" height="2.3" rx="0.8" fill="#0a0a0a" stroke="#3e5163" stroke-width="0.9"/>
<rect x="548.35" y="411.28" width="2.3" height="2.3" rx="0.8" fill="#0a0a0a" stroke="#7e7e7e" stroke-width="0.9"/>
<rect x="712.75" y="411.28" width="2.3" height="2.3" rx="0.8" fill="#0a0a0a" stroke="#7e7e7e" stroke-width="0.9"/>
<rect x="548.15" y="424.53" width="2.7" height="2.7" fill="#62dcdc"/>
<rect x="712.75" y="424.73" width="2.3" height="2.3" rx="0.8" fill="#0a0a0a" stroke="#6a2a2a" stroke-width="0.9"/>
<rect x="548.35" y="431.48" width="2.3" height="2.3" rx="0.8" fill="#0a0a0a" stroke="#6a2a2a" stroke-width="0.9"/>
<rect x="712.75" y="431.48" width="2.3" height="2.3" rx="0.8" fill="#0a0a0a" stroke="#6a2a2a" stroke-width="0.9"/>
<rect x="548.15" y="438.03" width="2.7" height="2.7" fill="#62dcdc"/>
<rect x="712.55" y="438.03" width="2.7" height="2.7" fill="#62dcdc"/>
<rect x="548.35" y="444.98" width="2.3" height="2.3" rx="0.8" fill="#0a0a0a" stroke="#6a2a2a" stroke-width="0.9"/>
<rect x="712.75" y="444.98" width="2.3" height="2.3" rx="0.8" fill="#0a0a0a" stroke="#6a2a2a" stroke-width="0.9"/>
<rect x="548.15" y="451.53" width="2.7" height="2.7" fill="#62dcdc"/>
<rect x="712.75" y="451.73" width="2.3" height="2.3" rx="0.8" fill="#0a0a0a" stroke="#6a2a2a" stroke-width="0.9"/>
<rect x="548.35" y="458.48" width="2.3" height="2.3" rx="0.8" fill="#0a0a0a" stroke="#6a2a2a" stroke-width="0.9"/>
<rect x="712.75" y="458.48" width="2.3" height="2.3" rx="0.8" fill="#0a0a0a" stroke="#6a2a2a" stroke-width="0.9"/>
<rect x="548.35" y="465.23" width="2.3" height="2.3" rx="0.8" fill="#0a0a0a" stroke="#6a2a2a" stroke-width="0.9"/>
<rect x="712.75" y="465.23" width="2.3" height="2.3" rx="0.8" fill="#0a0a0a" stroke="#6a2a2a" stroke-width="0.9"/>
<rect x="548.35" y="471.98" width="2.3" height="2.3" rx="0.8" fill="#0a0a0a" stroke="#6a2a2a" stroke-width="0.9"/>
<rect x="712.75" y="471.98" width="2.3" height="2.3" rx="0.8" fill="#0a0a0a" stroke="#6a2a2a" stroke-width="0.9"/>
<rect x="553.65" y="114.80" width="1.7" height="2" fill="#1a0a0a" stroke="#431919" stroke-width="0.7"/><rect x="556.54" y="114.80" width="1.7" height="2" fill="#1a0a0a" stroke="#431919" stroke-width="0.7"/><rect x="559.43" y="114.80" width="1.7" height="2" fill="#1a0a0a" stroke="#431919" stroke-width="0.7"/><rect x="562.32" y="114.80" width="1.7" height="2" fill="#1a0a0a" stroke="#431919" stroke-width="0.7"/><rect x="565.21" y="114.80" width="1.7" height="2" fill="#1a0a0a" stroke="#431919" stroke-width="0.7"/><rect x="568.09" y="114.80" width="1.7" height="2" fill="#1a0a0a" stroke="#431919" stroke-width="0.7"/><rect x="570.98" y="114.80" width="1.7" height="2" fill="#1a0a0a" stroke="#431919" stroke-width="0.7"/><rect x="573.87" y="114.80" width="1.7" height="2" fill="#1a0a0a" stroke="#431919" stroke-width="0.7"/><rect x="582.15" y="114.80" width="1.7" height="2" fill="#1a0a0a" stroke="#431919" stroke-width="0.7"/><rect x="585.04" y="114.80" width="1.7" height="2" fill="#1a0a0a" stroke="#431919" stroke-width="0.7"/><rect x="587.93" y="114.80" width="1.7" height="2" fill="#1a0a0a" stroke="#431919" stroke-width="0.7"/><rect x="590.82" y="114.80" width="1.7" height="2" fill="#1a0a0a" stroke="#431919" stroke-width="0.7"/><rect x="593.71" y="114.80" width="1.7" height="2" fill="#1a0a0a" stroke="#431919" stroke-width="0.7"/><rect x="596.59" y="114.80" width="1.7" height="2" fill="#1a0a0a" stroke="#431919" stroke-width="0.7"/><rect x="599.48" y="114.80" width="1.7" height="2" fill="#1a0a0a" stroke="#431919" stroke-width="0.7"/><rect x="602.37" y="114.80" width="1.7" height="2" fill="#1a0a0a" stroke="#431919" stroke-width="0.7"/><rect x="605.26" y="114.80" width="1.7" height="2" fill="#1a0a0a" stroke="#431919" stroke-width="0.7"/><rect x="608.15" y="114.80" width="1.7" height="2" fill="#1a0a0a" stroke="#431919" stroke-width="0.7"/><rect x="611.04" y="114.80" width="1.7" height="2" fill="#1a0a0a" stroke="#431919" stroke-width="0.7"/><rect x="613.93" y="114.80" width="1.7" height="2" fill="#1a0a0a" stroke="#431919" stroke-width="0.7"/><rect x="616.82" y="114.80" width="1.7" height="2" fill="#1a0a0a" stroke="#431919" stroke-width="0.7"/><rect x="619.71" y="114.80" width="1.7" height="2" fill="#1a0a0a" stroke="#431919" stroke-width="0.7"/><rect x="622.59" y="114.80" width="1.7" height="2" fill="#1a0a0a" stroke="#431919" stroke-width="0.7"/><rect x="638.15" y="114.80" width="1.7" height="2" fill="#1a0a0a" stroke="#431919" stroke-width="0.7"/><rect x="641.04" y="114.80" width="1.7" height="2" fill="#1a0a0a" stroke="#431919" stroke-width="0.7"/><rect x="643.93" y="114.80" width="1.7" height="2" fill="#1a0a0a" stroke="#431919" stroke-width="0.7"/><rect x="646.82" y="114.80" width="1.7" height="2" fill="#1a0a0a" stroke="#431919" stroke-width="0.7"/><rect x="649.71" y="114.80" width="1.7" height="2" fill="#1a0a0a" stroke="#431919" stroke-width="0.7"/><rect x="652.59" y="114.80" width="1.7" height="2" fill="#1a0a0a" stroke="#431919" stroke-width="0.7"/><rect x="655.48" y="114.80" width="1.7" height="2" fill="#1a0a0a" stroke="#431919" stroke-width="0.7"/><rect x="658.37" y="114.80" width="1.7" height="2" fill="#1a0a0a" stroke="#431919" stroke-width="0.7"/><rect x="661.26" y="114.80" width="1.7" height="2" fill="#1a0a0a" stroke="#431919" stroke-width="0.7"/><rect x="668.15" y="114.80" width="1.7" height="2" fill="#1a0a0a" stroke="#431919" stroke-width="0.7"/><rect x="671.04" y="114.80" width="1.7" height="2" fill="#1a0a0a" stroke="#431919" stroke-width="0.7"/><rect x="673.93" y="114.80" width="1.7" height="2" fill="#1a0a0a" stroke="#431919" stroke-width="0.7"/><rect x="676.82" y="114.80" width="1.7" height="2" fill="#1a0a0a" stroke="#431919" stroke-width="0.7"/><rect x="688.15" y="114.80" width="1.7" height="2" fill="#1a0a0a" stroke="#431919" stroke-width="0.7"/><rect x="691.04" y="114.80" width="1.7" height="2" fill="#1a0a0a" stroke="#431919" stroke-width="0.7"/><rect x="693.93" y="114.80" width="1.7" height="2" fill="#1a0a0a" stroke="#431919" stroke-width="0.7"/><rect x="696.82" y="114.80" width="1.7" height="2" fill="#1a0a0a" stroke="#431919" stroke-width="0.7"/><rect x="699.71" y="114.80" width="1.7" height="2" fill="#1a0a0a" stroke="#431919" stroke-width="0.7"/><rect x="702.59" y="114.80" width="1.7" height="2" fill="#1a0a0a" stroke="#431919" stroke-width="0.7"/><rect x="705.48" y="114.80" width="1.7" height="2" fill="#1a0a0a" stroke="#431919" stroke-width="0.7"/><rect x="708.37" y="114.80" width="1.7" height="2" fill="#1a0a0a" stroke="#431919" stroke-width="0.7"/><circle cx="549.30" cy="116.00" r="1.25" fill="#2a2a2a" stroke="#a2a2a2" stroke-width="0.9"/><circle cx="560.40" cy="116.00" r="1.25" fill="#2a2a2a" stroke="#a2a2a2" stroke-width="0.9"/><circle cx="566.00" cy="116.00" r="1.25" fill="#2a2a2a" stroke="#a2a2a2" stroke-width="0.9"/><circle cx="597.90" cy="116.00" r="1.25" fill="#2a2a2a" stroke="#a2a2a2" stroke-width="0.9"/><circle cx="626.00" cy="116.00" r="1.25" fill="#2a2a2a" stroke="#a2a2a2" stroke-width="0.9"/><circle cx="676.00" cy="116.00" r="1.25" fill="#2a2a2a" stroke="#a2a2a2" stroke-width="0.9"/><circle cx="693.70" cy="116.00" r="1.25" fill="#2a2a2a" stroke="#a2a2a2" stroke-width="0.9"/><circle cx="713.70" cy="116.00" r="1.25" fill="#2a2a2a" stroke="#a2a2a2" stroke-width="0.9"/><rect x="635.50" y="114.20" width="2.4" height="3.2" rx="0.6" fill="#74e4e4"/><rect x="647.00" y="114.20" width="2.4" height="3.2" rx="0.6" fill="#74e4e4"/><rect x="664.20" y="114.20" width="2.4" height="3.2" rx="0.6" fill="#74e4e4"/>
<rect x="553.65" y="478.70" width="1.7" height="2" fill="#1a0a0a" stroke="#431919" stroke-width="0.7"/><rect x="556.54" y="478.70" width="1.7" height="2" fill="#1a0a0a" stroke="#431919" stroke-width="0.7"/><rect x="559.43" y="478.70" width="1.7" height="2" fill="#1a0a0a" stroke="#431919" stroke-width="0.7"/><rect x="562.32" y="478.70" width="1.7" height="2" fill="#1a0a0a" stroke="#431919" stroke-width="0.7"/><rect x="565.21" y="478.70" width="1.7" height="2" fill="#1a0a0a" stroke="#431919" stroke-width="0.7"/><rect x="568.09" y="478.70" width="1.7" height="2" fill="#1a0a0a" stroke="#431919" stroke-width="0.7"/><rect x="570.98" y="478.70" width="1.7" height="2" fill="#1a0a0a" stroke="#431919" stroke-width="0.7"/><rect x="573.87" y="478.70" width="1.7" height="2" fill="#1a0a0a" stroke="#431919" stroke-width="0.7"/><rect x="582.15" y="478.70" width="1.7" height="2" fill="#1a0a0a" stroke="#431919" stroke-width="0.7"/><rect x="585.04" y="478.70" width="1.7" height="2" fill="#1a0a0a" stroke="#431919" stroke-width="0.7"/><rect x="587.93" y="478.70" width="1.7" height="2" fill="#1a0a0a" stroke="#431919" stroke-width="0.7"/><rect x="590.82" y="478.70" width="1.7" height="2" fill="#1a0a0a" stroke="#431919" stroke-width="0.7"/><rect x="593.71" y="478.70" width="1.7" height="2" fill="#1a0a0a" stroke="#431919" stroke-width="0.7"/><rect x="596.59" y="478.70" width="1.7" height="2" fill="#1a0a0a" stroke="#431919" stroke-width="0.7"/><rect x="599.48" y="478.70" width="1.7" height="2" fill="#1a0a0a" stroke="#431919" stroke-width="0.7"/><rect x="602.37" y="478.70" width="1.7" height="2" fill="#1a0a0a" stroke="#431919" stroke-width="0.7"/><rect x="605.26" y="478.70" width="1.7" height="2" fill="#1a0a0a" stroke="#431919" stroke-width="0.7"/><rect x="608.15" y="478.70" width="1.7" height="2" fill="#1a0a0a" stroke="#431919" stroke-width="0.7"/><rect x="611.04" y="478.70" width="1.7" height="2" fill="#1a0a0a" stroke="#431919" stroke-width="0.7"/><rect x="613.93" y="478.70" width="1.7" height="2" fill="#1a0a0a" stroke="#431919" stroke-width="0.7"/><rect x="616.82" y="478.70" width="1.7" height="2" fill="#1a0a0a" stroke="#431919" stroke-width="0.7"/><rect x="619.71" y="478.70" width="1.7" height="2" fill="#1a0a0a" stroke="#431919" stroke-width="0.7"/><rect x="622.59" y="478.70" width="1.7" height="2" fill="#1a0a0a" stroke="#431919" stroke-width="0.7"/><rect x="625.48" y="478.70" width="1.7" height="2" fill="#1a0a0a" stroke="#431919" stroke-width="0.7"/><rect x="639.15" y="478.70" width="1.7" height="2" fill="#1a0a0a" stroke="#431919" stroke-width="0.7"/><rect x="642.04" y="478.70" width="1.7" height="2" fill="#1a0a0a" stroke="#431919" stroke-width="0.7"/><rect x="644.93" y="478.70" width="1.7" height="2" fill="#1a0a0a" stroke="#431919" stroke-width="0.7"/><rect x="647.82" y="478.70" width="1.7" height="2" fill="#1a0a0a" stroke="#431919" stroke-width="0.7"/><rect x="650.71" y="478.70" width="1.7" height="2" fill="#1a0a0a" stroke="#431919" stroke-width="0.7"/><rect x="653.59" y="478.70" width="1.7" height="2" fill="#1a0a0a" stroke="#431919" stroke-width="0.7"/><rect x="656.48" y="478.70" width="1.7" height="2" fill="#1a0a0a" stroke="#431919" stroke-width="0.7"/><rect x="659.37" y="478.70" width="1.7" height="2" fill="#1a0a0a" stroke="#431919" stroke-width="0.7"/><rect x="662.26" y="478.70" width="1.7" height="2" fill="#1a0a0a" stroke="#431919" stroke-width="0.7"/><rect x="665.15" y="478.70" width="1.7" height="2" fill="#1a0a0a" stroke="#431919" stroke-width="0.7"/><rect x="675.15" y="478.70" width="1.7" height="2" fill="#1a0a0a" stroke="#431919" stroke-width="0.7"/><rect x="678.04" y="478.70" width="1.7" height="2" fill="#1a0a0a" stroke="#431919" stroke-width="0.7"/><rect x="687.15" y="478.70" width="1.7" height="2" fill="#1a0a0a" stroke="#431919" stroke-width="0.7"/><rect x="690.04" y="478.70" width="1.7" height="2" fill="#1a0a0a" stroke="#431919" stroke-width="0.7"/><rect x="692.93" y="478.70" width="1.7" height="2" fill="#1a0a0a" stroke="#431919" stroke-width="0.7"/><rect x="695.82" y="478.70" width="1.7" height="2" fill="#1a0a0a" stroke="#431919" stroke-width="0.7"/><rect x="698.71" y="478.70" width="1.7" height="2" fill="#1a0a0a" stroke="#431919" stroke-width="0.7"/><rect x="701.59" y="478.70" width="1.7" height="2" fill="#1a0a0a" stroke="#431919" stroke-width="0.7"/><rect x="704.48" y="478.70" width="1.7" height="2" fill="#1a0a0a" stroke="#431919" stroke-width="0.7"/><rect x="707.37" y="478.70" width="1.7" height="2" fill="#1a0a0a" stroke="#431919" stroke-width="0.7"/><circle cx="549.30" cy="479.90" r="1.25" fill="#2a2a2a" stroke="#a2a2a2" stroke-width="0.9"/><circle cx="617.00" cy="479.90" r="1.25" fill="#2a2a2a" stroke="#a2a2a2" stroke-width="0.9"/><circle cx="636.50" cy="479.90" r="1.25" fill="#2a2a2a" stroke="#a2a2a2" stroke-width="0.9"/><circle cx="648.00" cy="479.90" r="1.25" fill="#2a2a2a" stroke="#a2a2a2" stroke-width="0.9"/><circle cx="665.00" cy="479.90" r="1.25" fill="#2a2a2a" stroke="#a2a2a2" stroke-width="0.9"/><circle cx="713.70" cy="479.90" r="1.25" fill="#2a2a2a" stroke="#a2a2a2" stroke-width="0.9"/><rect x="565.20" y="478.10" width="2.4" height="3.2" rx="0.6" fill="#74e4e4"/><rect x="571.00" y="478.10" width="2.4" height="3.2" rx="0.6" fill="#74e4e4"/><rect x="588.10" y="478.10" width="2.4" height="3.2" rx="0.6" fill="#74e4e4"/><rect x="599.50" y="478.10" width="2.4" height="3.2" rx="0.6" fill="#74e4e4"/><rect x="672.40" y="478.10" width="2.4" height="3.2" rx="0.6" fill="#74e4e4"/>
<rect x="290.5" y="399.3" width="115" height="60.6" fill="#000" stroke="#8d8d8d" stroke-width="1"/>
<rect x="295.8" y="402.4" width="104.6" height="54.8" fill="none" stroke="#b4b4b4" stroke-width="1"/>
<rect x="334.6" y="402.4" width="24.8" height="54.8" fill="none" stroke="#14148e" stroke-width="1.1"/>
<path d="M334 402.4h26M334 457.2h26" stroke="#6a6ac0" stroke-width="1"/>
</svg>
<style>.hd{font-size:12.5px;color:#1e1e1e;-webkit-text-stroke:0.15px #1e1e1e;transform:translateX(-50%);letter-spacing:0.3px;}.c{font-size:15px;color:#0a0a0a;-webkit-text-stroke:0.2px #0a0a0a;}.cc{transform:translateX(-50%);}.bi{font-weight:bold;font-style:italic;font-size:14.5px;}.na{color:#a3a3a3;-webkit-text-stroke:0.15px #a3a3a3;}.ls{letter-spacing:0.45px;margin-left:0.3px;}.nn{margin-left:1px;letter-spacing:-0.2px;}.bt{font-size:14.5px;color:#111;-webkit-text-stroke:0.2px #111;transform:translateX(-50%);}</style>
<div class="abs" style="left:0;top:488px;width:1000px;height:1px;background:#b7b7b7;"></div>
<div class="abs dockhead" style="left:0;top:489px;width:1000px;height:24px;"></div>
<div class="abs" style="left:0;top:513px;width:1000px;height:1px;background:#b4b4b4;"></div>
<svg class="abs" style="left:0px;top:492px" width="40" height="17" viewBox="0 0 40 17">
<circle cx="10" cy="8.5" r="7.3" fill="#4b4b4b" stroke="#2f2f2f" stroke-width="0.8"/>
<path d="M6.7 5.2 L13.3 11.8 M13.3 5.2 L6.7 11.8" stroke="#fff" stroke-width="2.3" stroke-linecap="butt"/>
<circle cx="29.8" cy="8.5" r="7.3" fill="#4b4b4b" stroke="#2f2f2f" stroke-width="0.8"/>
<rect x="28.3" y="5.2" width="5" height="5" rx="1" fill="none" stroke="#fff" stroke-width="1.1"/>
<rect x="25.9" y="7.6" width="5.6" height="4.8" rx="1" fill="#222" stroke="#fff" stroke-width="1.2"/>
</svg>
<span class="t" style="left:474px;top:494.5px;font-size:13.5px;color:#1c1c1c;letter-spacing:-0.1px;">I/O Constraints</span>
<div class="abs" style="left:0;top:514px;width:998px;height:360.5px;background:#fff;overflow:hidden;">
<div class="abs" style="left:0;top:0;width:998px;height:23.5px;background:#efefef;"></div>
<div class="abs" style="left:0;top:23.5px;width:25px;height:340px;background:#ececec;"></div>
<div class="abs" style="left:24.5px;top:2.5px;width:1px;height:19.5px;background:#c7c7c7;"></div>
<div class="abs" style="left:135.5px;top:2.5px;width:1px;height:19.5px;background:#c7c7c7;"></div>
<div class="abs" style="left:135.5px;top:23.5px;width:1px;height:340px;background:#eeeeee;"></div>
<div class="abs" style="left:246.5px;top:2.5px;width:1px;height:19.5px;background:#c7c7c7;"></div>
<div class="abs" style="left:246.5px;top:23.5px;width:1px;height:340px;background:#eeeeee;"></div>
<div class="abs" style="left:357.5px;top:2.5px;width:1px;height:19.5px;background:#c7c7c7;"></div>
<div class="abs" style="left:357.5px;top:23.5px;width:1px;height:340px;background:#eeeeee;"></div>
<div class="abs" style="left:468.5px;top:2.5px;width:1px;height:19.5px;background:#c7c7c7;"></div>
<div class="abs" style="left:468.5px;top:23.5px;width:1px;height:340px;background:#eeeeee;"></div>
<div class="abs" style="left:579.5px;top:2.5px;width:1px;height:19.5px;background:#c7c7c7;"></div>
<div class="abs" style="left:579.5px;top:23.5px;width:1px;height:340px;background:#eeeeee;"></div>
<div class="abs" style="left:690.5px;top:2.5px;width:1px;height:19.5px;background:#c7c7c7;"></div>
<div class="abs" style="left:690.5px;top:23.5px;width:1px;height:340px;background:#eeeeee;"></div>
<div class="abs" style="left:801.5px;top:2.5px;width:1px;height:19.5px;background:#c7c7c7;"></div>
<div class="abs" style="left:801.5px;top:23.5px;width:1px;height:340px;background:#eeeeee;"></div>
<div class="abs" style="left:912.5px;top:2.5px;width:1px;height:19.5px;background:#c7c7c7;"></div>
<div class="abs" style="left:912.5px;top:23.5px;width:1px;height:340px;background:#eeeeee;"></div>
<div class="abs" style="left:25px;top:56.3px;width:975px;height:1px;background:#eeeeee;"></div>
<div class="abs" style="left:2.5px;top:56.3px;width:20px;height:1px;background:#c4c4c4;"></div>
<div class="abs" style="left:25px;top:89.7px;width:975px;height:1px;background:#eeeeee;"></div>
<div class="abs" style="left:2.5px;top:89.7px;width:20px;height:1px;background:#c4c4c4;"></div>
<div class="abs" style="left:25px;top:123.0px;width:975px;height:1px;background:#eeeeee;"></div>
<div class="abs" style="left:2.5px;top:123.0px;width:20px;height:1px;background:#c4c4c4;"></div>
<div class="abs" style="left:25px;top:156.3px;width:975px;height:1px;background:#eeeeee;"></div>
<div class="abs" style="left:2.5px;top:156.3px;width:20px;height:1px;background:#c4c4c4;"></div>
<div class="abs" style="left:25px;top:189.6px;width:975px;height:1px;background:#eeeeee;"></div>
<div class="abs" style="left:2.5px;top:189.6px;width:20px;height:1px;background:#c4c4c4;"></div>
<div class="abs" style="left:25px;top:223.0px;width:975px;height:1px;background:#eeeeee;"></div>
<div class="abs" style="left:2.5px;top:223.0px;width:20px;height:1px;background:#c4c4c4;"></div>
<div class="abs" style="left:25px;top:256.3px;width:975px;height:1px;background:#eeeeee;"></div>
<div class="abs" style="left:2.5px;top:256.3px;width:20px;height:1px;background:#c4c4c4;"></div>
<div class="abs" style="left:25px;top:289.6px;width:975px;height:1px;background:#eeeeee;"></div>
<div class="abs" style="left:2.5px;top:289.6px;width:20px;height:1px;background:#c4c4c4;"></div>
<div class="abs" style="left:25px;top:323.0px;width:975px;height:1px;background:#eeeeee;"></div>
<div class="abs" style="left:2.5px;top:323.0px;width:20px;height:1px;background:#c4c4c4;"></div>
<div class="abs" style="left:25px;top:356.3px;width:975px;height:1px;background:#eeeeee;"></div>
<div class="abs" style="left:2.5px;top:356.3px;width:20px;height:1px;background:#c4c4c4;"></div>
<div class="abs" style="left:25px;top:389.6px;width:975px;height:1px;background:#eeeeee;"></div>
<div class="abs" style="left:2.5px;top:389.6px;width:20px;height:1px;background:#c4c4c4;"></div>
<span class="t hd" style="left:73.2px;top:5.5px;">Port</span>
<span class="t hd" style="left:191.5px;top:5.5px;">Direction</span>
<span class="t hd" style="left:302.5px;top:5.5px;">Diff Pair</span>
<span class="t hd" style="left:413.5px;top:5.5px;">Location</span>
<span class="t hd" style="left:524.5px;top:5.5px;">Bank</span>
<span class="t hd" style="left:635.5px;top:5.5px;">Exclusive</span>
<span class="t hd" style="left:746.5px;top:5.5px;">IO Type</span>
<span class="t hd" style="left:857.5px;top:5.5px;">Drive</span>
<span class="t hd" style="left:968.5px;top:5.5px;">Pull Mode</span>
<svg class="abs" style="left:119px;top:8px" width="11" height="8" viewBox="0 0 11 8"><path d="M1.4 6.2 L5.4 2.2 L9.4 6.2" fill="none" stroke="#222" stroke-width="1.5"/></svg>
<span class="t" style="left:5.6px;top:35px;font-size:12.5px;color:#1a1a1a;-webkit-text-stroke:0.15px #1a1a1a;">1</span>
<span class="t c" style="left:31px;top:32px;">sub</span>
<span class="t c cc" style="left:191.5px;top:32px;">input</span>
<span class="t c cc" style="left:413.5px;top:32px;">77</span>
<span class="t c cc" style="left:524.5px;top:32px;">1</span>
<span class="t c cc" style="left:635.5px;top:32px;">False</span>
<span class="t c cc bi ls" style="left:746.5px;top:33px;">LVCMOS33</span>
<span class="t c cc na" style="left:857.5px;top:32px;">N/A</span>
<span class="t c cc bi nn" style="left:968.5px;top:33px;">NONE</span>
<span class="t" style="left:5.6px;top:68px;font-size:12.5px;color:#1a1a1a;-webkit-text-stroke:0.15px #1a1a1a;">2</span>
<span class="t c" style="left:31px;top:65px;">rst</span>
<span class="t c cc" style="left:191.5px;top:65px;">input</span>
<span class="t c cc" style="left:413.5px;top:65px;">75</span>
<span class="t c cc" style="left:524.5px;top:65px;">1</span>
<span class="t c cc" style="left:635.5px;top:65px;">False</span>
<span class="t c cc bi ls" style="left:746.5px;top:66px;">LVCMOS33</span>
<span class="t c cc na" style="left:857.5px;top:65px;">N/A</span>
<span class="t c cc bi nn" style="left:968.5px;top:66px;">NONE</span>
<span class="t" style="left:5.6px;top:102px;font-size:12.5px;color:#1a1a1a;-webkit-text-stroke:0.15px #1a1a1a;">3</span>
<span class="t c" style="left:31px;top:98px;">load_b</span>
<span class="t c cc" style="left:191.5px;top:98px;">input</span>
<span class="t c cc" style="left:413.5px;top:98px;">74</span>
<span class="t c cc" style="left:524.5px;top:98px;">1</span>
<span class="t c cc" style="left:635.5px;top:98px;">False</span>
<span class="t c cc bi ls" style="left:746.5px;top:99px;">LVCMOS33</span>
<span class="t c cc na" style="left:857.5px;top:98px;">N/A</span>
<span class="t c cc bi nn" style="left:968.5px;top:99px;">NONE</span>
<span class="t" style="left:5.6px;top:135px;font-size:12.5px;color:#1a1a1a;-webkit-text-stroke:0.15px #1a1a1a;">4</span>
<span class="t c" style="left:31px;top:132px;">load_a</span>
<span class="t c cc" style="left:191.5px;top:132px;">input</span>
<span class="t c cc" style="left:413.5px;top:132px;">73</span>
<span class="t c cc" style="left:524.5px;top:132px;">1</span>
<span class="t c cc" style="left:635.5px;top:132px;">False</span>
<span class="t c cc bi ls" style="left:746.5px;top:133px;">LVCMOS33</span>
<span class="t c cc na" style="left:857.5px;top:132px;">N/A</span>
<span class="t c cc bi nn" style="left:968.5px;top:133px;">NONE</span>
<span class="t" style="left:5.6px;top:168px;font-size:12.5px;color:#1a1a1a;-webkit-text-stroke:0.15px #1a1a1a;">5</span>
<span class="t c" style="left:31px;top:165px;">in_b[3]</span>
<span class="t c cc" style="left:191.5px;top:165px;">input</span>
<span class="t c cc" style="left:413.5px;top:165px;">16</span>
<span class="t c cc" style="left:524.5px;top:165px;">6</span>
<span class="t c cc" style="left:635.5px;top:165px;">False</span>
<span class="t c cc bi ls" style="left:746.5px;top:166px;">LVCMOS33</span>
<span class="t c cc na" style="left:857.5px;top:165px;">N/A</span>
<span class="t c cc bi nn" style="left:968.5px;top:166px;">NONE</span>
<span class="t" style="left:5.6px;top:201px;font-size:12.5px;color:#1a1a1a;-webkit-text-stroke:0.15px #1a1a1a;">6</span>
<span class="t c" style="left:31px;top:198px;">in_b[2]</span>
<span class="t c cc" style="left:191.5px;top:198px;">input</span>
<span class="t c cc" style="left:413.5px;top:198px;">27</span>
<span class="t c cc" style="left:524.5px;top:198px;">5</span>
<span class="t c cc" style="left:635.5px;top:198px;">False</span>
<span class="t c cc bi ls" style="left:746.5px;top:199px;">LVCMOS33</span>
<span class="t c cc na" style="left:857.5px;top:198px;">N/A</span>
<span class="t c cc bi nn" style="left:968.5px;top:199px;">NONE</span>
<span class="t" style="left:5.6px;top:235px;font-size:12.5px;color:#1a1a1a;-webkit-text-stroke:0.15px #1a1a1a;">7</span>
<span class="t c" style="left:31px;top:231px;">in_b[1]</span>
<span class="t c cc" style="left:191.5px;top:231px;">input</span>
<span class="t c cc" style="left:413.5px;top:231px;">28</span>
<span class="t c cc" style="left:524.5px;top:231px;">5</span>
<span class="t c cc" style="left:635.5px;top:231px;">False</span>
<span class="t c cc bi ls" style="left:746.5px;top:232px;">LVCMOS33</span>
<span class="t c cc na" style="left:857.5px;top:231px;">N/A</span>
<span class="t c cc bi nn" style="left:968.5px;top:232px;">NONE</span>
<span class="t" style="left:5.6px;top:268px;font-size:12.5px;color:#1a1a1a;-webkit-text-stroke:0.15px #1a1a1a;">8</span>
<span class="t c" style="left:31px;top:265px;">in_b[0]</span>
<span class="t c cc" style="left:191.5px;top:265px;">input</span>
<span class="t c cc" style="left:413.5px;top:265px;">25</span>
<span class="t c cc" style="left:524.5px;top:265px;">5</span>
<span class="t c cc" style="left:635.5px;top:265px;">False</span>
<span class="t c cc bi ls" style="left:746.5px;top:266px;">LVCMOS33</span>
<span class="t c cc na" style="left:857.5px;top:265px;">N/A</span>
<span class="t c cc bi nn" style="left:968.5px;top:266px;">NONE</span>
<span class="t" style="left:5.6px;top:301px;font-size:12.5px;color:#1a1a1a;-webkit-text-stroke:0.15px #1a1a1a;">9</span>
<span class="t c" style="left:31px;top:298px;">in_a[3]</span>
<span class="t c cc" style="left:191.5px;top:298px;">input</span>
<span class="t c cc" style="left:413.5px;top:298px;">26</span>
<span class="t c cc" style="left:524.5px;top:298px;">5</span>
<span class="t c cc" style="left:635.5px;top:298px;">False</span>
<span class="t c cc bi ls" style="left:746.5px;top:299px;">LVCMOS33</span>
<span class="t c cc na" style="left:857.5px;top:298px;">N/A</span>
<span class="t c cc bi nn" style="left:968.5px;top:299px;">NONE</span>
<span class="t" style="left:5.6px;top:335px;font-size:12.5px;color:#1a1a1a;-webkit-text-stroke:0.15px #1a1a1a;">10</span>
<span class="t c" style="left:31px;top:331px;">in_a[2]</span>
<span class="t c cc" style="left:191.5px;top:331px;">input</span>
<span class="t c cc" style="left:413.5px;top:331px;">29</span>
<span class="t c cc" style="left:524.5px;top:331px;">5</span>
<span class="t c cc" style="left:635.5px;top:331px;">False</span>
<span class="t c cc bi ls" style="left:746.5px;top:332px;">LVCMOS33</span>
<span class="t c cc na" style="left:857.5px;top:331px;">N/A</span>
<span class="t c cc bi nn" style="left:968.5px;top:332px;">NONE</span>
<span class="t" style="left:5.6px;top:368px;font-size:12.5px;color:#1a1a1a;-webkit-text-stroke:0.15px #1a1a1a;">11</span>
<span class="t c" style="left:31px;top:365px;">in_a[1]</span>
<span class="t c cc" style="left:191.5px;top:365px;">input</span>
<span class="t c cc" style="left:413.5px;top:365px;">30</span>
<span class="t c cc" style="left:524.5px;top:365px;">5</span>
<span class="t c cc" style="left:635.5px;top:365px;">False</span>
<span class="t c cc bi ls" style="left:746.5px;top:366px;">LVCMOS33</span>
<span class="t c cc na" style="left:857.5px;top:365px;">N/A</span>
<span class="t c cc bi nn" style="left:968.5px;top:366px;">NONE</span>
</div>
<div class="abs" style="left:0;top:874.5px;width:1000px;height:25px;background:#e6e6e6;"></div>
<div class="abs" style="left:2.5px;top:876px;width:993px;height:22px;border-radius:6px;background:#fff;box-shadow:0 0 0 0.5px #cdcdcd,0 1px 1.5px rgba(0,0,0,0.12);"></div>
<span class="t bt" style="left:30.0px;top:880.7px;">Mess...</span>
<div class="abs" style="left:60.0px;top:876px;width:77.0px;height:22px;background:linear-gradient(#2a86fb,#1572f0);"></div>
<span class="t bt" style="left:98.0px;top:880.7px;color:#fff;-webkit-text-stroke:0.25px #fff;">I/O Cons...</span>
<div class="abs" style="left:136.5px;top:879px;width:1px;height:16px;background:#e6e6e6;"></div>
<span class="t bt" style="left:195.1px;top:880.7px;">Primitive Con...</span>
<div class="abs" style="left:251.5px;top:879px;width:1px;height:16px;background:#e6e6e6;"></div>
<span class="t bt" style="left:302.4px;top:880.7px;">Group Con...</span>
<div class="abs" style="left:350.5px;top:879px;width:1px;height:16px;background:#e6e6e6;"></div>
<span class="t bt" style="left:413.1px;top:880.7px;">Resource Rese...</span>
<div class="abs" style="left:474.0px;top:879px;width:1px;height:16px;background:#e6e6e6;"></div>
<span class="t bt" style="left:537.0px;top:880.7px;">Clock Net Con...</span>
<div class="abs" style="left:596.5px;top:879px;width:1px;height:16px;background:#e6e6e6;"></div>
<span class="t bt" style="left:676.8px;top:880.7px;">GCLK Primitive Con...</span>
<div class="abs" style="left:754.0px;top:879px;width:1px;height:16px;background:#e6e6e6;"></div>
<span class="t bt" style="left:833.9px;top:880.7px;">HCLK Primitive Con...</span>
<div class="abs" style="left:911.5px;top:879px;width:1px;height:16px;background:#e6e6e6;"></div>
<span class="t bt" style="left:957.0px;top:880.7px;">Vref Con...</span>
</div></body></html>
